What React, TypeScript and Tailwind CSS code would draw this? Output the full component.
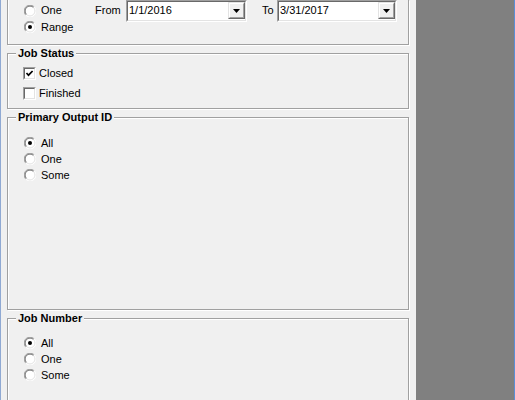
import React from "react";

const font = { fontFamily: '"Liberation Sans", Arial, sans-serif' };

function Radio({ checked }: { checked?: boolean }) {
  return (
    <svg width="12" height="12" viewBox="0 0 12 12" className="shrink-0">
      <circle cx="6" cy="6" r="5.5" fill="#fff" />
      <path d="M1.8 10.2 A5.5 5.5 0 0 1 10.2 1.8" fill="none" stroke="#a0a0a0" strokeWidth="1" />
      <path d="M10.2 1.8 A5.5 5.5 0 0 1 1.8 10.2" fill="none" stroke="#ffffff" strokeWidth="1" />
      <path d="M2.5 9.5 A4.5 4.5 0 0 1 9.5 2.5" fill="none" stroke="#696969" strokeWidth="1" />
      <path d="M9.5 2.5 A4.5 4.5 0 0 1 2.5 9.5" fill="none" stroke="#e3e3e3" strokeWidth="1" />
      {checked && <circle cx="6" cy="6" r="2" fill="#000" />}
    </svg>
  );
}

function RadioItem({ label, checked, className }: { label: string; checked?: boolean; className?: string }) {
  return (
    <div className={"flex items-center gap-[5px] " + (className ?? "")}>
      <Radio checked={checked} />
      <span className="text-[11px] leading-[13px] text-black">{label}</span>
    </div>
  );
}

function Check({ checked }: { checked?: boolean }) {
  return (
    <div className="w-[13px] h-[13px] shrink-0 border border-t-[#a0a0a0] border-l-[#a0a0a0] border-b-white border-r-white">
      <div className="w-full h-full border border-t-[#696969] border-l-[#696969] border-b-[#e3e3e3] border-r-[#e3e3e3] bg-white">
        {checked && (
          <svg width="9" height="9" viewBox="0 0 9 9">
            <path d="M1.5 4 L3.5 6.2 L7.6 2" fill="none" stroke="#000" strokeWidth="1.7" />
          </svg>
        )}
      </div>
    </div>
  );
}

function Combo({ value, width }: { value: string; width: string }) {
  return (
    <div className={"h-[22px] border border-t-[#a0a0a0] border-l-[#a0a0a0] border-b-white border-r-white " + width}>
      <div className="h-full border border-t-[#696969] border-l-[#696969] border-b-[#e3e3e3] border-r-[#e3e3e3] bg-white flex items-center">
        <span className="flex-1 pl-[1px] text-[11px] leading-[13px] text-black">{value}</span>
        <div className="w-[17px] h-[17px] mr-[0px] border border-t-[#e3e3e3] border-l-[#e3e3e3] border-b-[#696969] border-r-[#696969]">
          <div className="w-full h-full border border-t-white border-l-white border-b-[#a0a0a0] border-r-[#a0a0a0] bg-[#f0f0f0] flex items-center justify-center">
            <svg width="7" height="4" viewBox="0 0 7 4">
              <path d="M0 0 H7 L3.5 4 Z" fill="#000" />
            </svg>
          </div>
        </div>
      </div>
    </div>
  );
}

function Group({ title, className, children }: { title: string; className?: string; children?: React.ReactNode }) {
  return (
    <div className={"w-[402px] border border-[#a0a0a0] shadow-[1px_1px_0_#fff,inset_1px_1px_0_#fff] " + (className ?? "")}>
      <div className="-mt-[7px] ml-[8px] w-fit px-[2px] bg-[#f0f0f0] h-[13px] text-[11px] leading-[13px] font-bold text-black">
        {title}
      </div>
      {children}
    </div>
  );
}

export default function App() {
  return (
    <div className="w-[515px] h-[400px] overflow-hidden flex bg-[#f0f0f0]" style={font}>
      <div className="w-[1px] h-full bg-[#8fa9d3]" />
      <div className="w-[415px] h-full pl-[6px] flex flex-col overflow-hidden">
        {/* top group (top border off screen) */}
        <div className="w-[402px] h-[45px] shrink-0 border-x border-b border-[#a0a0a0] shadow-[1px_1px_0_#fff,inset_1px_0_0_#fff] pl-[16px] flex flex-col">
          <div className="h-[21px] flex items-center">
            <RadioItem label="One" className="w-[71px]" />
            <span className="w-[31px] text-[11px] leading-[13px] text-black">From</span>
            <Combo value="1/1/2016" width="w-[121px]" />
            <span className="ml-[15px] w-[15px] text-[11px] leading-[13px] text-black">To</span>
            <Combo value="3/31/2017" width="w-[120px]" />
          </div>
          <div className="h-[12px] flex items-center">
            <RadioItem label="Range" checked />
          </div>
        </div>

        <Group title="Job Status" className="mt-[8px] h-[56px] shrink-0">
          <div className="pl-[15px] pt-[3px] flex flex-col">
            <div className="h-[20px] flex items-center gap-[3px]">
              <Check checked />
              <span className="text-[11px] leading-[13px] text-black">Closed</span>
            </div>
            <div className="h-[20px] flex items-center gap-[3px]">
              <Check />
              <span className="text-[11px] leading-[13px] text-black">Finished</span>
            </div>
          </div>
        </Group>

        <Group title="Primary Output ID" className="mt-[8px] h-[193px] shrink-0">
          <div className="pl-[16px] pt-[11px] flex flex-col">
            <RadioItem label="All" checked className="h-[16px]" />
            <RadioItem label="One" className="h-[16px]" />
            <RadioItem label="Some" className="h-[16px]" />
          </div>
        </Group>

        <Group title="Job Number" className="mt-[8px] h-[120px] shrink-0">
          <div className="pl-[16px] pt-[10px] flex flex-col">
            <RadioItem label="All" checked className="h-[16px]" />
            <RadioItem label="One" className="h-[16px]" />
            <RadioItem label="Some" className="h-[16px]" />
          </div>
        </Group>
      </div>
      <div className="w-[98px] h-full bg-[#808080]" />
      <div className="w-[1px] h-full bg-[#5b8ed6]" />
    </div>
  );
}
